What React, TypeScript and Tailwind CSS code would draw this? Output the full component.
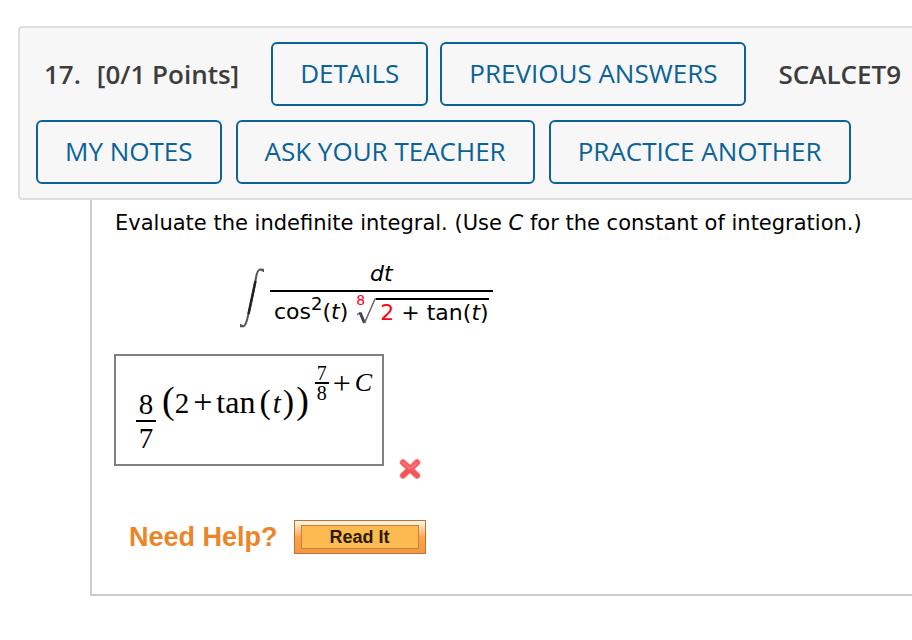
import type { ReactNode } from 'react';

const HeaderButton = ({ children }: { children: ReactNode }) => (
    <button
        type="button"
        className="h-16 px-[27px] pb-0.5 border-2 border-[#0a6297] rounded-md text-[#0a6297] text-[26px] font-medium whitespace-nowrap"
    >
        {children}
    </button>
);

const Integral = () => (
    <svg className="w-6 h-[60px] shrink-0" viewBox="0 0 24 60" fill="none">
        <path d="M23 3C20 0 17.500 2 16.500 7C14.500 18 9.500 42 7 52C5.500 58 3.500 59.500 1 57" stroke="#555" strokeWidth="2" />
        <path d="M15.500 13L8.500 46" stroke="#222" strokeWidth="2.500" />
        <path d="M20 1.500H23.500V4M0.500 56V58.500H3.500" stroke="#555" strokeWidth="1.500" />
    </svg>
);

const Radical = () => (
    <svg className="w-5 h-7 shrink-0" viewBox="0 0 20 28" fill="none">
        <path d="M1 17L4 14.500" stroke="#777" strokeWidth="1.500" />
        <path d="M4 14.500L8.500 25" stroke="#444" strokeWidth="3" />
        <path d="M8.500 25L19 1H20" stroke="#666" strokeWidth="1.500" />
    </svg>
);

const WrongMark = () => (
    <svg className="w-[22px] h-[22px]" viewBox="0 0 22 22" fill="none" role="img" aria-label="Incorrect">
        <path d="M4 4.500L18 17.500M18 4.500L4 17.500" stroke="#fcb4b6" strokeWidth="7" strokeLinecap="round" />
        <path d="M4 4.500L18 17.500M18 4.500L4 17.500" stroke="#f4545a" strokeWidth="5.500" strokeLinecap="round" />
        <path d="M4.500 5L10 10M17.500 5L12 10" stroke="#fb7074" strokeWidth="3" strokeLinecap="round" />
    </svg>
);

const Question = () => (
    <div role="math" className="mt-[23px] ml-[126px] flex items-start gap-1.5 text-[22px] leading-7">
        <div className="pt-2">
            <Integral />
        </div>
        <div>
            <div className="h-8 border-b-2 border-black text-center italic">dt</div>
            <div className="flex pt-1.5 px-1">
                <div className="whitespace-nowrap">
                    cos<sup className="text-lg leading-none">2</sup>(<i>t</i>)
                </div>
                <div className="relative ml-2">
                    <span className="absolute left-0 -top-1.5 text-sm leading-4 text-[#ff0015]">8</span>
                    <Radical />
                </div>
                <div className="h-7 border-t-2 border-black pl-1 leading-[26px] whitespace-nowrap">
                    <span className="text-[#ff0015]">2</span> + tan(<i>t</i>)
                </div>
            </div>
        </div>
    </div>
);

const Answer = () => (
    <div
        role="math"
        className="w-[270px] h-28 shrink-0 border-2 border-[#808080] pl-5 pt-2 flex items-start font-['Liberation_Serif',serif] text-[29px] leading-8"
    >
        <div className="mt-6 w-5 text-center">
            <div className="border-b-2 border-black">8</div>
            <div>7</div>
        </div>
        <div className="mt-5 ml-1.5 flex items-baseline whitespace-nowrap">
            <span className="text-[38px]">(</span>
            <span>2</span>
            <span className="px-1 text-[34px]">+</span>
            <span className="text-[32px]">tan</span>
            <span className="pl-1 text-[34px]">(</span>
            <i className="px-0.5">t</i>
            <span className="text-[34px]">)</span>
            <span className="pl-0.5 text-[38px]">)</span>
        </div>
        <div className="ml-1.5 flex items-center text-[26px]">
            <div className="w-3.5 text-center text-xl leading-[18px]">
                <div className="border-b-2 border-black">7</div>
                <div>8</div>
            </div>
            <span className="pl-1 text-[32px]">+</span>
            <i className="pl-1">C</i>
        </div>
    </div>
);

const App = () => {
    return (
        <div className="min-h-screen bg-white overflow-x-hidden pl-[18px] pt-[26px] text-black">
            <header className="border-2 border-r-0 border-[#dedede] rounded-l-sm bg-[#f7f7f7] pl-4 py-3.5 flex flex-col gap-3.5 font-['Open_Sans',sans-serif]">
                <div className="flex items-center gap-3">
                    <h2 className="pl-2 pr-5 flex gap-4 text-[26px] font-semibold text-[#3d3d3d] whitespace-nowrap">
                        <span>17.</span>
                        <span>[0/1 Points]</span>
                    </h2>
                    <HeaderButton>DETAILS</HeaderButton>
                    <HeaderButton>PREVIOUS ANSWERS</HeaderButton>
                    <strong className="pl-5 text-[26px] font-semibold text-[#3d3d3d]">SCALCET9</strong>
                </div>
                <div className="flex items-center gap-3.5">
                    <HeaderButton>MY NOTES</HeaderButton>
                    <HeaderButton>ASK YOUR TEACHER</HeaderButton>
                    <HeaderButton>PRACTICE ANOTHER</HeaderButton>
                </div>
            </header>

            <main className="ml-[72px] border-l-2 border-b-2 border-[#ccc] pl-[22px] pt-[9px] pb-10 font-['DejaVu_Sans',sans-serif]">
                <p className="pl-px text-[21px] leading-7 whitespace-nowrap">
                    Evaluate the indefinite integral. (Use <i>C</i> for the constant of integration.)
                </p>

                <Question />

                <div className="mt-[26px] flex items-end gap-[15px]">
                    <Answer />
                    <div className="-mb-3.5">
                        <WrongMark />
                    </div>
                </div>

                <div className="mt-[54px] pl-[15px] flex items-center gap-4 font-['Liberation_Sans',sans-serif] font-bold">
                    <span className="text-[27px] leading-8 text-[#ec8528]">Need Help?</span>
                    <button
                        type="button"
                        className="w-[132px] h-[34px] px-1.5 py-1 border border-[#b97434] bg-linear-to-b from-[#fff0dc] from-5% via-[#fba34c] via-50% to-[#f89540]"
                    >
                        <span className="flex h-full items-center justify-center border border-[#c0843f] bg-[#fcba50] text-lg leading-5 text-[#2b1d08]">
                            Read It
                        </span>
                    </button>
                </div>
            </main>
        </div>
    );
};

export default App;
